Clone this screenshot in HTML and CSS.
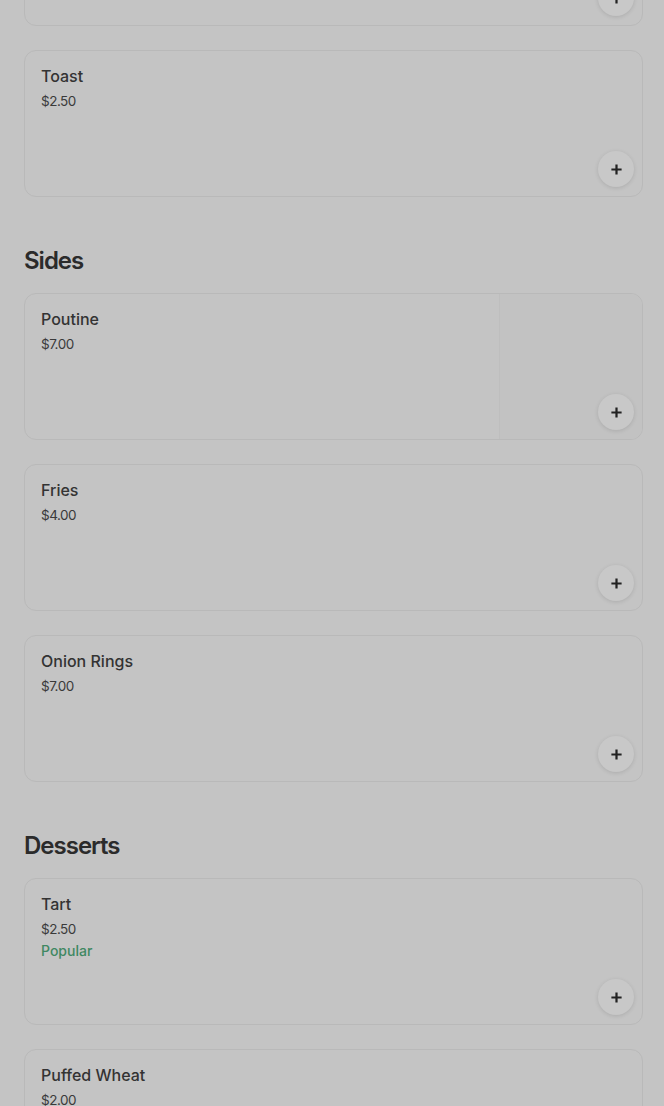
FILE: index.html
```html
<!DOCTYPE html>
<html>
<head>
	<title>Menu</title>
	<meta charset="utf-8">
	<link rel="stylesheet" href="styles.css">
</head>
<body>
	<div class="menu">
		<div class="section">
			<div class="item item_cut">
				<div class="item_info">
					<div class="item_name">Eggs</div>
					<div class="item_price">$4.00</div>
				</div>
				<div class="add_btn"><svg viewBox="0 0 14 14"><path d="M7 1.5v11M1.5 7h11"/></svg></div>
			</div>
			<div class="item">
				<div class="item_info">
					<div class="item_name">Toast</div>
					<div class="item_price">$2.50</div>
				</div>
				<div class="add_btn"><svg viewBox="0 0 14 14"><path d="M7 1.5v11M1.5 7h11"/></svg></div>
			</div>
		</div>

		<div class="section">
			<h2 class="section_title">Sides</h2>
			<div class="item">
				<div class="item_info">
					<div class="item_name">Poutine</div>
					<div class="item_price">$7.00</div>
				</div>
				<div class="item_pic"></div>
				<div class="add_btn"><svg viewBox="0 0 14 14"><path d="M7 1.5v11M1.5 7h11"/></svg></div>
			</div>
			<div class="item">
				<div class="item_info">
					<div class="item_name">Fries</div>
					<div class="item_price">$4.00</div>
				</div>
				<div class="add_btn"><svg viewBox="0 0 14 14"><path d="M7 1.5v11M1.5 7h11"/></svg></div>
			</div>
			<div class="item">
				<div class="item_info">
					<div class="item_name">Onion Rings</div>
					<div class="item_price">$7.00</div>
				</div>
				<div class="add_btn"><svg viewBox="0 0 14 14"><path d="M7 1.5v11M1.5 7h11"/></svg></div>
			</div>
		</div>

		<div class="section">
			<h2 class="section_title">Desserts</h2>
			<div class="item">
				<div class="item_info">
					<div class="item_name">Tart</div>
					<div class="item_price">$2.50</div>
					<div class="item_tag">Popular</div>
				</div>
				<div class="add_btn"><svg viewBox="0 0 14 14"><path d="M7 1.5v11M1.5 7h11"/></svg></div>
			</div>
			<div class="item">
				<div class="item_info">
					<div class="item_name">Puffed Wheat</div>
					<div class="item_price">$2.00</div>
				</div>
				<div class="add_btn"><svg viewBox="0 0 14 14"><path d="M7 1.5v11M1.5 7h11"/></svg></div>
			</div>
		</div>
	</div>
</body>
</html>
```

FILE: styles.css
```css
*{
	box-sizing:border-box;
	margin:0;
	padding:0;
}
body{
	background:#c4c4c4;
	font-family:Inter,"Noto Sans",sans-serif;
	color:#2e2e2e;
	overflow:hidden;
}
.menu{
	padding:0 21px 0 24px;
}
.section{
	display:flex;
	flex-direction:column;
	gap:24px;
	margin-bottom:50px;
}
.section_title{
	font-size:24px;
	font-weight:600;
	letter-spacing:-1px;
	line-height:30px;
	margin-top:-1px;
	margin-bottom:-7px;
	color:#2b2b2b;
}
.item{
	position:relative;
	display:flex;
	height:147px;
	border:1px solid #b9b9b9;
	border-radius:12px;
	overflow:hidden;
}
.item_cut{
	margin-top:-121px;
}
.item_info{
	flex:1;
	padding:15px 16px;
}
.item_name{
	font-size:16px;
	font-weight:500;
	line-height:20px;
	color:#333;
}
.item_price{
	font-size:13.5px;
	line-height:18px;
	margin-top:6px;
	color:#3a3a3a;
	letter-spacing:-0.5px;
}
.item_tag{
	font-size:14px;
	font-weight:500;
	line-height:18px;
	margin-top:4px;
	color:#3f8862;
}
.item_pic{
	width:143px;
	background:#c2c2c2;
	border-left:1px solid #bebebe;
}
.add_btn{
	position:absolute;
	right:8px;
	bottom:9px;
	width:36px;
	height:36px;
	border-radius:50%;
	background:#c8c8c8;
	box-shadow:0 1px 4px rgba(0,0,0,0.12);
	display:flex;
	align-items:center;
	justify-content:center;
}
.add_btn svg{
	width:13px;
	height:13px;
	stroke:#222;
	stroke-width:2.4;
	fill:none;
}
```
